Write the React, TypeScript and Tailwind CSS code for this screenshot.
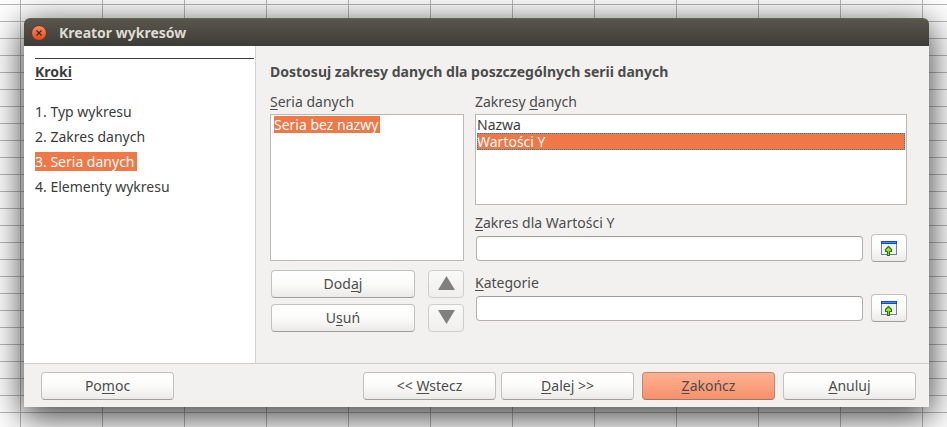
import { useState } from "react";
import type { ReactNode } from "react";

function Key({ children }: { children: ReactNode }) {
  return <span className="underline decoration-1 underline-offset-2">{children}</span>;
}

function PushButton({
  children,
  className = "",
  primary = false,
  disabled = false,
  label,
}: {
  children: ReactNode;
  className?: string;
  primary?: boolean;
  disabled?: boolean;
  label?: string;
}) {
  const tone = primary
    ? "border-[#b58a78] border-b-[#9c7868] bg-linear-to-b from-[#ffb092] to-[#f6916a]"
    : disabled
      ? "border-[#cfcdcb] bg-linear-to-b from-[#f9f9f8] to-[#f0efee]"
      : "border-[#c3c1be] border-b-[#a09e9b] bg-linear-to-b from-white via-[#fbfbfa] to-[#ebeae9]";
  return (
    <button
      type="button"
      disabled={disabled}
      aria-label={label}
      className={`flex h-7 items-center justify-center rounded border ${tone} ${className}`}
    >
      {children}
    </button>
  );
}

function ShrinkIcon() {
  return (
    <svg width="16" height="16" viewBox="0 0 16 16" aria-hidden="true" shapeRendering="crispEdges">
      <rect x="0" y="1" width="16" height="14" fill="#73808c" />
      <rect x="1" y="4" width="14" height="10" fill="#eef3f8" />
      <rect x="0" y="1" width="16" height="3" fill="#1649c4" />
      <rect x="1" y="2" width="14" height="1" fill="#4b8dfc" />
      <path
        d="M7.5 6.5 L10.5 9.5 V11.5 H8.5 V15.5 H6.5 V11.5 H4.5 V9.5 Z"
        fill="#a6e22e"
        stroke="#2d7a0c"
        strokeWidth="1.2"
        strokeLinejoin="round"
        shapeRendering="auto"
      />
    </svg>
  );
}

function RangeField({ id, label }: { id: string; label: ReactNode }) {
  return (
    <div>
      <label htmlFor={id} className="block h-[22px] leading-[22px]">
        {label}
      </label>
      <div className="flex items-center gap-2 pl-px">
        <input
          id={id}
          type="text"
          className="h-[25px] min-w-0 flex-1 rounded border border-[#b3b0ad] border-t-[#a19e9b] bg-white px-1 outline-none"
        />
        <PushButton className="w-9 shrink-0" label="Zmniejsz">
          <ShrinkIcon />
        </PushButton>
      </div>
    </div>
  );
}

const steps = ["1. Typ wykresu", "2. Zakres danych", "3. Seria danych", "4. Elementy wykresu"];

export default function App() {
  const [role, setRole] = useState("Wartości Y");

  return (
    <div className="min-h-screen bg-white bg-[linear-gradient(to_right,#b8b8b8_1px,transparent_1px),linear-gradient(to_bottom,#b8b8b8_1px,transparent_1px)] bg-[size:82px_17px,82px_17px] bg-[position:20px_0px,0px_4px] pt-[18px] pr-[18px] pb-5 pl-6 font-['Noto_Sans',sans-serif] text-sm text-[#4c4c4c]">
      <section
        role="dialog"
        aria-labelledby="title"
        className="rounded-t-md bg-[#f2f1f0] shadow-[0_8px_34px_2px_rgba(0,0,0,0.75)]"
      >
        <header className="flex h-7 items-center gap-3 rounded-t-md border-t border-[#65614f] bg-linear-to-b from-[#59564c] to-[#3d3c37] pr-2 pl-[7px]">
          <button
            type="button"
            aria-label="Zamknij"
            className="flex size-4 items-center justify-center rounded-full border border-[#6e3520] bg-linear-to-b from-[#f58a62] to-[#dd4a1b]"
          >
            <svg width="6" height="6" viewBox="0 0 6 6" aria-hidden="true">
              <path d="M0.5 0.5 L5.5 5.5 M5.5 0.5 L0.5 5.5" stroke="#4a2416" strokeWidth="1.2" />
            </svg>
          </button>
          <h1 id="title" className="font-bold text-[#dfdbd2]">
            Kreator wykresów
          </h1>
        </header>

        <div className="flex">
          <nav
            aria-labelledby="steps"
            className="w-[232px] shrink-0 border-r border-[#d5d3d1] bg-white pt-3 pr-px pl-[11px]"
          >
            <h2
              id="steps"
              className="border-t border-[#3c3c3c] pt-[3px] font-bold text-[#3c3c3c] underline underline-offset-2"
            >
              Kroki
            </h2>
            <ol className="mt-[17px] text-[#3c3c3c]">
              {steps.map((step) => (
                <li key={step} className="flex h-[25px] items-center">
                  <a
                    href="#steps"
                    className={
                      step.startsWith("3") ? "h-[19px] bg-[#f07746] pr-[2px] leading-[19px] text-white" : "leading-[19px]"
                    }
                  >
                    {step}
                  </a>
                </li>
              ))}
            </ol>
          </nav>

          <main className="min-w-0 flex-1 pt-4 pr-[22px] pb-[31px] pl-[14px]">
            <h2 className="font-bold">Dostosuj zakresy danych dla poszczególnych serii danych</h2>
            <div className="mt-2 flex gap-[11px]">
              <div className="w-[194px] shrink-0">
                <div id="series" className="h-6 leading-6">
                  <Key>S</Key>eria danych
                </div>
                <ul
                  role="listbox"
                  aria-labelledby="series"
                  className="h-[147px] border border-[#bcb9b4] bg-white pt-px pl-[3px] text-white"
                >
                  <li role="option" aria-selected="true" className="flex">
                    <span className="h-[17px] bg-[#f07746] pr-[2px] leading-[17px]">Seria bez nazwy</span>
                  </li>
                </ul>
                <div className="mt-[9px] grid grid-cols-[1fr_36px] gap-x-[13px] gap-y-[6px] pl-px">
                  <PushButton>
                    <span>
                      Dod<Key>a</Key>j
                    </span>
                  </PushButton>
                  <PushButton disabled label="W górę" className="pb-[2px]">
                    <svg width="17" height="14" viewBox="0 0 17 14" aria-hidden="true">
                      <path d="M8.5 0 L17 14 H0 Z" fill="#808080" />
                    </svg>
                  </PushButton>
                  <PushButton>
                    <span>
                      U<Key>s</Key>uń
                    </span>
                  </PushButton>
                  <PushButton disabled label="W dół" className="pb-[2px]">
                    <svg width="17" height="14" viewBox="0 0 17 14" aria-hidden="true">
                      <path d="M0 0 H17 L8.5 14 Z" fill="#808080" />
                    </svg>
                  </PushButton>
                </div>
              </div>

              <div className="min-w-0 flex-1">
                <div id="ranges" className="h-6 leading-6">
                  Zakresy <Key>d</Key>anych
                </div>
                <ul
                  role="listbox"
                  aria-labelledby="ranges"
                  className="mb-[7px] h-[91px] border border-[#bcb9b4] bg-white px-px pt-px text-[#3c3c3c]"
                >
                  {["Nazwa", "Wartości Y"].map((name) => (
                    <li
                      key={name}
                      role="option"
                      aria-selected={role === name}
                      onClick={() => setRole(name)}
                      className={
                        role === name
                          ? "h-[17px] bg-[#f07746] leading-[17px] text-white outline-1 -outline-offset-1 outline-dotted outline-[#0f88b9]"
                          : "h-[17px] leading-[17px]"
                      }
                    >
                      {name}
                    </li>
                  ))}
                </ul>
                <div className="flex flex-col gap-[10px]">
                  <RangeField
                    id="values"
                    label={
                      <>
                        <Key>Z</Key>akres dla Wartości Y
                      </>
                    }
                  />
                  <RangeField
                    id="categories"
                    label={
                      <>
                        <Key>K</Key>ategorie
                      </>
                    }
                  />
                </div>
              </div>
            </div>
          </main>
        </div>

        <footer className="flex h-11 items-center border-t border-[#cfcdcb] pr-[13px] pl-[17px]">
          <PushButton className="w-[133px]">
            <span>
              Po<Key>m</Key>oc
            </span>
          </PushButton>
          <div className="ml-auto flex gap-2">
            <div className="flex gap-[5px]">
              <PushButton className="w-[133px]">
                <span>
                  &lt;&lt; <Key>W</Key>stecz
                </span>
              </PushButton>
              <PushButton className="w-[133px]">
                <span>
                  <Key>D</Key>alej &gt;&gt;
                </span>
              </PushButton>
            </div>
            <PushButton className="w-[133px]" primary>
              <span>
                <Key>Z</Key>akończ
              </span>
            </PushButton>
            <PushButton className="w-[133px]">
              <span>
                <Key>A</Key>nuluj
              </span>
            </PushButton>
          </div>
        </footer>
      </section>
    </div>
  );
}
